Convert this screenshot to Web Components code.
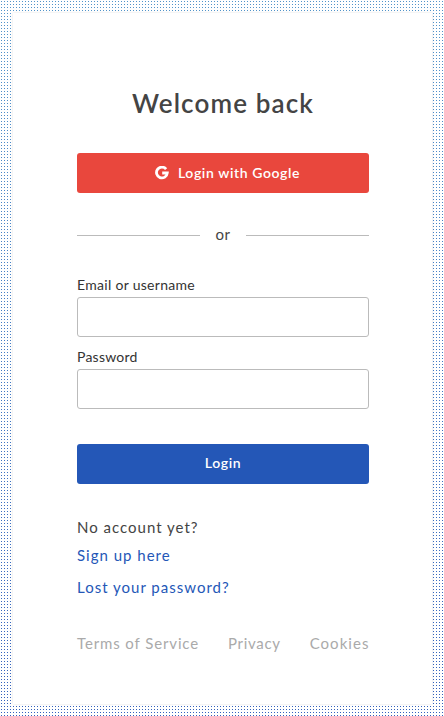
<!DOCTYPE html>
<html lang="en">
<head>
  <meta charset="utf-8">
  <title>Login</title>
  <style>
    html, body {
      margin: 0;
      height: 100%;
    }
    body {
      font-family: Lato, "Open Sans", sans-serif;
      color: #444;
      background: linear-gradient(#5294ca, #3260bc);
    }
  </style>
</head>
<body>
  <login-page>
    <login-title>Welcome back</login-title>
    <login-button variant="google">
      <google-icon slot="icon"></google-icon>Login with Google
    </login-button>
    <login-divider>or</login-divider>
    <login-field type="text">Email or username</login-field>
    <login-field type="password">Password</login-field>
    <login-button variant="primary">Login</login-button>
    <login-links></login-links>
    <login-footer></login-footer>
  </login-page>

  <script>
    class BaseElement extends HTMLElement {
      constructor() {
        super()
        this.attachShadow({ mode: "open" })
      }
      connectedCallback() {
        const template = document.createElement("template")
        template.innerHTML = `${this.getTemplate()}<style>* { box-sizing: border-box; } ${this.getStyles()}</style>`
        this.shadowRoot.appendChild(template.content.cloneNode(true))
      }
    }

    // white sheet over a dotted frame: the grid lines hide the body gradient except for 1px dots
    class LoginPage extends BaseElement {
      getTemplate() {
        return `<main><slot></slot></main>`
      }
      getStyles() {
        return `
          :host {
            display: block;
            box-sizing: border-box;
            height: 716px;
            padding: 13px 12px 12px 13px;
            background-image:
              linear-gradient(90deg, #fff 1px, transparent 1px, transparent 2px, #fff 2px),
              linear-gradient(#fff 1px, transparent 1px, transparent 2px, #fff 2px);
            background-size: 3px 3px;
          }
          main {
            display: flex;
            flex-direction: column;
            height: 691px;
            padding: 71px 63px 0 64px;
            background: #fff;
            box-shadow: 0 0 2px rgba(0, 0, 0, 0.12);
          }
        `
      }
    }
    customElements.define('login-page', LoginPage)

    class LoginTitle extends BaseElement {
      getTemplate() {
        return `<h1><slot></slot></h1>`
      }
      getStyles() {
        return `
          :host {
            display: block;
            text-align: center;
          }
          h1 {
            margin: 0 0 31px;
            font-size: 26px;
            line-height: 38px;
            font-weight: 600;
            letter-spacing: 1.12px;
          }
        `
      }
    }
    customElements.define('login-title', LoginTitle)

    class GoogleIcon extends BaseElement {
      getTemplate() {
        return `
          <svg width="14" height="14" viewBox="0 0 14 14" fill="none" stroke="#fff" stroke-width="2.8">
            <path d="M11.1 3.1A5.4 5.4 0 1 0 12.3 7H7.2"/>
          </svg>
        `
      }
      getStyles() {
        return `
          :host, svg {
            display: block;
          }
        `
      }
    }
    customElements.define('google-icon', GoogleIcon)

    class LoginButton extends BaseElement {
      getTemplate() {
        return `<button type="button"><slot name="icon"></slot><span><slot></slot></span></button>`
      }
      getStyles() {
        return `
          :host {
            display: block;
          }
          button {
            display: flex;
            align-items: center;
            justify-content: center;
            gap: 9px;
            width: 100%;
            height: 40px;
            padding: 0 0 1px;
            border: 0;
            border-radius: 3px;
            background: #2457b7;
            color: #fff;
            font: 600 14px/20px Lato, sans-serif;
            letter-spacing: 0.6px;
            cursor: pointer;
          }
          :host([variant="google"]) button {
            padding-left: 9px;
            background: #e9473d;
          }
          :host([variant="primary"]) {
            margin-top: 27px;
          }
          :host([variant="primary"]) button {
            padding-bottom: 2px;
          }
        `
      }
    }
    customElements.define('login-button', LoginButton)

    class LoginDivider extends BaseElement {
      getTemplate() {
        return `<span><slot></slot></span>`
      }
      getStyles() {
        return `
          :host {
            display: flex;
            align-items: center;
            gap: 15.5px;
            height: 28px;
            margin: 28px 0 24px;
            font-size: 15px;
            line-height: 28px;
            letter-spacing: 0.5px;
          }
          span {
            padding-bottom: 2px;
          }
          :host::before, :host::after {
            content: "";
            flex: 1;
            height: 1px;
            background: #bbb;
          }
        `
      }
    }
    customElements.define('login-divider', LoginDivider)

    class LoginField extends BaseElement {
      getTemplate() {
        return `
          <label>
            <span><slot></slot></span>
            <input type="${this.getAttribute("type")}">
          </label>
        `
      }
      getStyles() {
        return `
          :host {
            display: block;
            margin-bottom: 8px;
            color: #333;
          }
          span {
            display: block;
            font-size: 14px;
            line-height: 20px;
            letter-spacing: 0.3px;
            margin-bottom: 2px;
          }
          :host([type="password"]) span {
            letter-spacing: 0.24px;
          }
          label {
            display: block;
            padding-top: 2px;
          }
          input {
            display: block;
            width: 100%;
            height: 40px;
            padding: 0 10px;
            border: 1px solid #bbb;
            border-radius: 3px;
            background: #fff;
            outline: none;
          }
        `
      }
    }
    customElements.define('login-field', LoginField)

    class LoginLinks extends BaseElement {
      getTemplate() {
        return `
          <p><span>No account yet?</span><a href="#">Sign up here</a></p>
          <p><a href="#">Lost your password?</a></p>
        `
      }
      getStyles() {
        return `
          :host {
            display: block;
            margin-top: 29px;
            font-size: 15px;
            line-height: 28px;
            letter-spacing: 1px;
          }
          p {
            display: flex;
            flex-direction: column;
            align-items: flex-start;
            margin: 0 0 4px;
          }
          p:last-child {
            letter-spacing: 0.95px;
          }
          a {
            color: #2457b7;
            text-decoration: none;
          }
        `
      }
    }
    customElements.define('login-links', LoginLinks)

    class LoginFooter extends BaseElement {
      getTemplate() {
        const links = ["Terms of Service", "Privacy", "Cookies"]
        return `<nav>${links.map(item => `<a href="#">${item}</a>`).join('')}</nav>`
      }
      getStyles() {
        return `
          :host {
            display: block;
            margin-top: 24px;
          }
          nav {
            display: flex;
            justify-content: space-between;
            font-size: 15px;
            line-height: 28px;
            letter-spacing: 0.88px;
          }
          a {
            color: #aaa;
            text-decoration: none;
          }
          a:nth-child(2) {
            letter-spacing: 0.7px;
          }
          a:last-child {
            letter-spacing: 1.05px;
            margin-right: -0.5px;
          }
        `
      }
    }
    customElements.define('login-footer', LoginFooter)
  </script>
</body>
</html>
